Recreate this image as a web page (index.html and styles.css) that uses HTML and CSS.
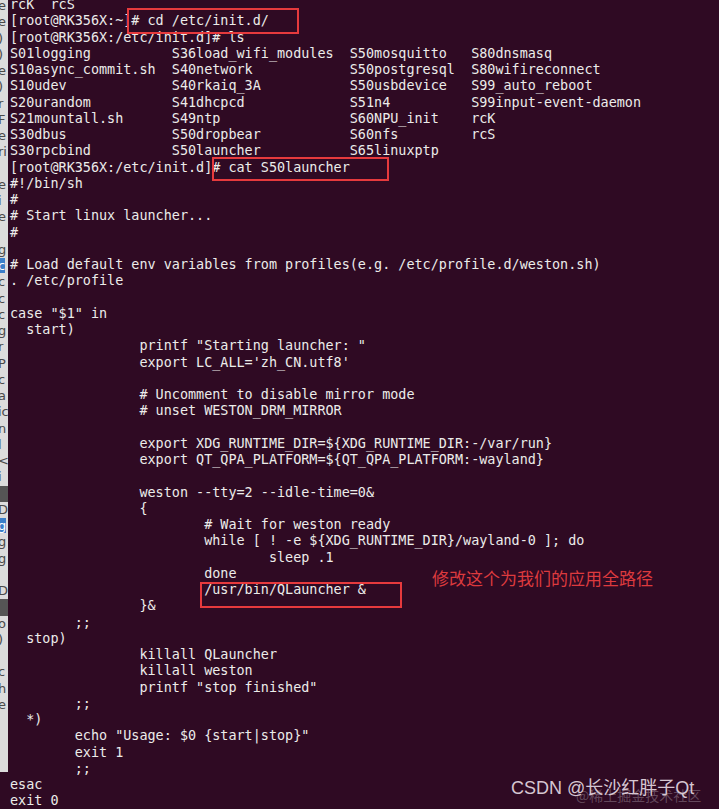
FILE: index.html
```html
<!DOCTYPE html>
<html>
<head>
<meta charset="utf-8">
<link rel="stylesheet" href="styles.css">
</head>
<body>
<div class="screen">
  <div class="side"><pre class="side-text">e
e
)
)
e
)
r
F
e
ri

e
i
e

g
<span class="hl">c</span>
c
c
c
g
r
P
c
a
ic
n
l
&lt;
i
<span class="dk"> </span>
D
<span class="hl">g</span>
g
g

D
<span class="dk"> </span>
o
)

c
h
e</pre></div>
  <div class="term">
<pre class="out">rcK  rcS
[root@RK356X:~]# cd /etc/init.d/
[root@RK356X:/etc/init.d]# ls
S01logging          S36load_wifi_modules  S50mosquitto   S80dnsmasq
S10async_commit.sh  S40network            S50postgresql  S80wifireconnect
S10udev             S40rkaiq_3A           S50usbdevice   S99_auto_reboot
S20urandom          S41dhcpcd             S51n4          S99input-event-daemon
S21mountall.sh      S49ntp                S60NPU_init    rcK
S30dbus             S50dropbear           S60nfs         rcS
S30rpcbind          S50launcher           S65linuxptp
[root@RK356X:/etc/init.d]# cat S50launcher
#!/bin/sh
#
# Start linux launcher...
#

# Load default env variables from profiles(e.g. /etc/profile.d/weston.sh)
. /etc/profile

case "$1" in
  start)
                printf "Starting launcher: "
                export LC_ALL='zh_CN.utf8'

                # Uncomment to disable mirror mode
                # unset WESTON_DRM_MIRROR

                export XDG_RUNTIME_DIR=${XDG_RUNTIME_DIR:-/var/run}
                export QT_QPA_PLATFORM=${QT_QPA_PLATFORM:-wayland}

                weston --tty=2 --idle-time=0&amp;
                {
                        # Wait for weston ready
                        while [ ! -e ${XDG_RUNTIME_DIR}/wayland-0 ]; do
                                sleep .1
                        done
                        /usr/bin/QLauncher &amp;
                }&amp;
        ;;
  stop)
                killall QLauncher
                killall weston
                printf "stop finished"
        ;;
  *)
        echo "Usage: $0 {start|stop}"
        exit 1
        ;;
esac
exit 0</pre>
  </div>
  <div class="box box-cd"></div>
  <div class="box box-cat"></div>
  <div class="box box-path"></div>
  <div class="note">修改这个为我们的应用全路径</div>
  <div class="wm-under">@稀土掘金技术社区</div>
  <div class="wm">CSDN @长沙红胖子Qt</div>
</div>
</body>
</html>
```

FILE: styles.css
```css
html, body {
  margin: 0;
  padding: 0;
  background: #300a24;
}

.screen {
  position: relative;
  display: flex;
  align-items: flex-start;
  width: 719px;
  height: 809px;
  overflow: hidden;
  background: #2f0a23;
}

.side {
  flex: none;
  width: 8px;
  height: 772px;
  background: #dcdcdc;
  overflow: hidden;
}

.side-text {
  margin: -2px 0 0 -2px;
  font-family: "DejaVu Sans", sans-serif;
  font-size: 13px;
  line-height: 16.25px;
  color: #4a4a4a;
}

.side-text .hl {
  background: #3b7fc9;
  color: #ffffff;
}

.side-text .dk {
  display: inline-block;
  width: 12px;
  background: #555;
}

.term {
  flex: 1;
  padding-left: 2px;
  overflow: hidden;
}

.out {
  margin: -2.9px 0 0 0;
  font-family: "DejaVu Sans Mono", monospace;
  font-size: 13.45px;
  line-height: 16.25px;
  color: #ececea;
}

.box {
  position: absolute;
  border: 2px solid #e63a3d;
  box-sizing: border-box;
}

.box-cd {
  left: 127px;
  top: 8px;
  width: 172px;
  height: 26px;
}

.box-cat {
  left: 212px;
  top: 157px;
  width: 177px;
  height: 24px;
}

.box-path {
  left: 200px;
  top: 582px;
  width: 202px;
  height: 26px;
}

.note {
  position: absolute;
  left: 432px;
  top: 567px;
  font-family: "Noto Sans CJK SC", sans-serif;
  font-size: 17px;
  line-height: 22px;
  color: #dd3a3e;
}

.wm {
  position: absolute;
  left: 511px;
  top: 777px;
  font-family: "Liberation Sans", "Noto Sans CJK SC", sans-serif;
  font-size: 18px;
  line-height: 22px;
  color: #d6c6d2;
  white-space: nowrap;
}

.wm-under {
  position: absolute;
  left: 576px;
  top: 786px;
  font-family: "Noto Sans CJK SC", sans-serif;
  font-size: 14px;
  line-height: 18px;
  color: rgba(200, 190, 200, 0.35);
  white-space: nowrap;
}
```
